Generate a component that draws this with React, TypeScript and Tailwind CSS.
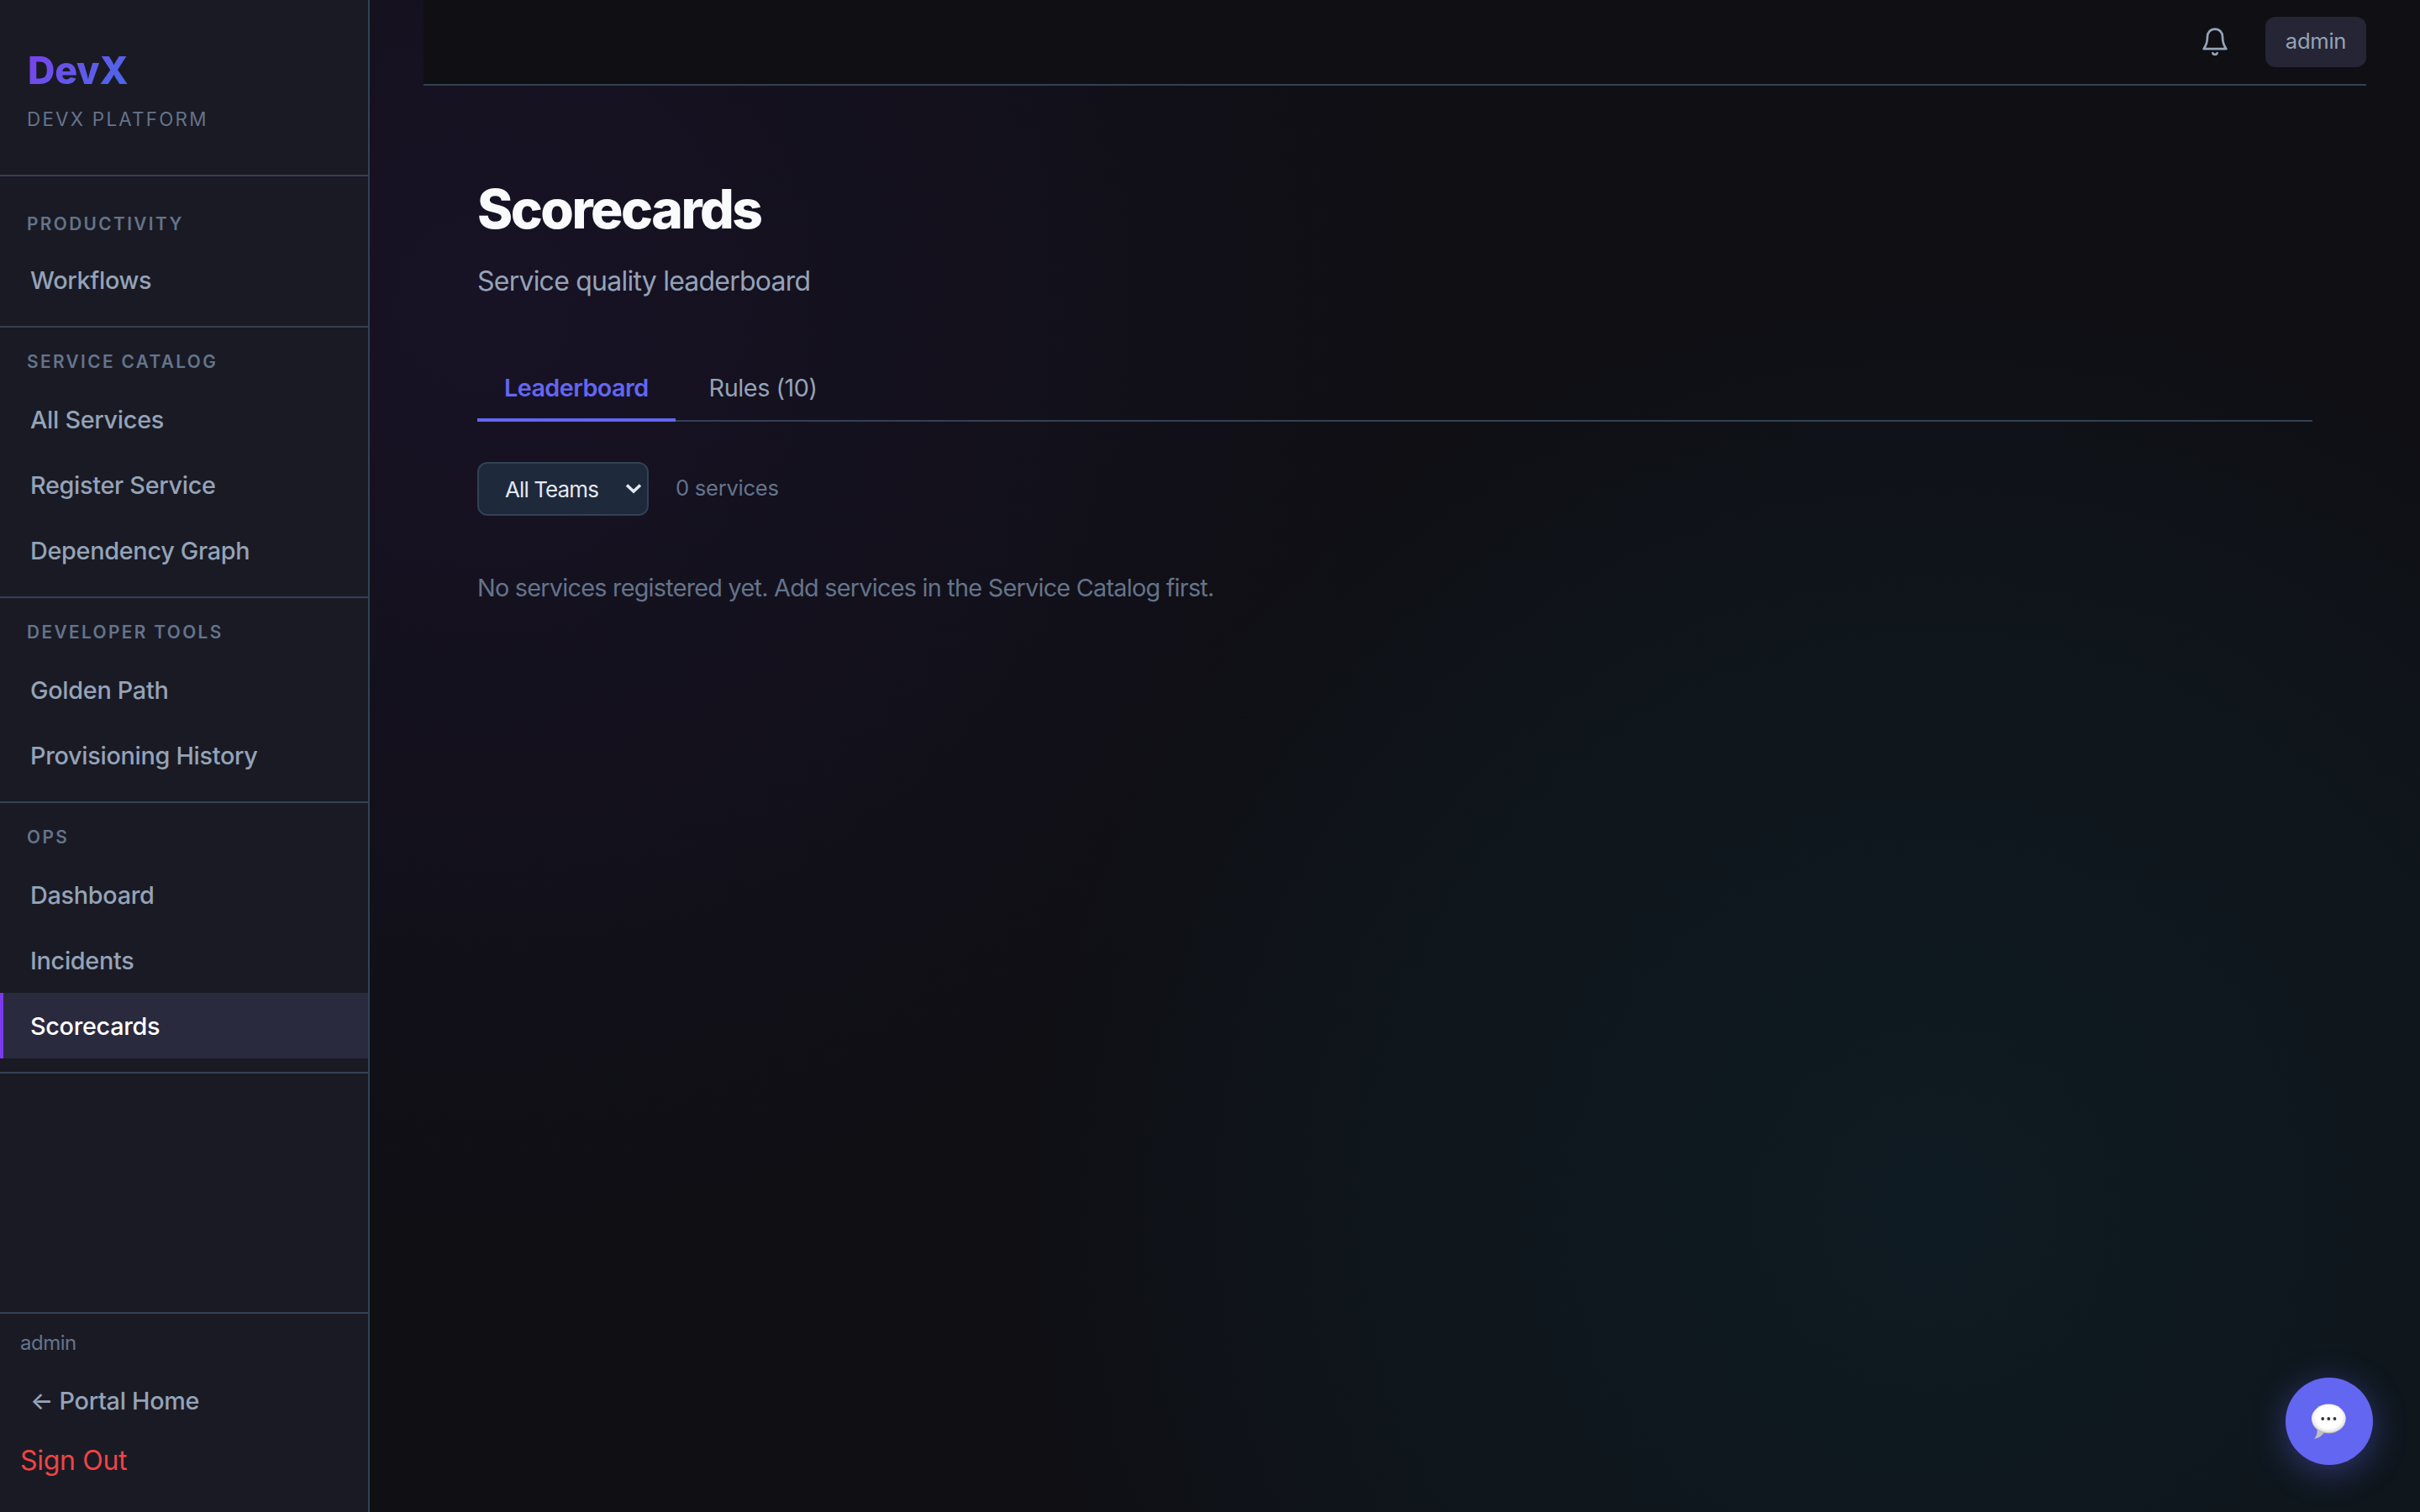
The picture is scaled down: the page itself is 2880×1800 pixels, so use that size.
const navSections = [
  { title: 'Productivity', items: ['Workflows'] },
  { title: 'Service Catalog', items: ['All Services', 'Register Service', 'Dependency Graph'] },
  { title: 'Developer Tools', items: ['Golden Path', 'Provisioning History'] },
  { title: 'Ops', items: ['Dashboard', 'Incidents', 'Scorecards'] },
];

const activeItem = 'Scorecards';

function NavItem({ label, active = false }: { label: string; active?: boolean }) {
  return (
    <a
      href="#"
      className={
        active
          ? 'flex h-[78px] items-center border-l-4 border-[#7c3aed] bg-[#2a2a3e] pt-0.5 pl-8 text-[28.8px] font-medium tracking-[-0.3px] text-white'
          : 'flex h-[78px] items-center border-l-4 border-transparent pt-0.5 pl-8 text-[28.8px] font-medium tracking-[-0.3px] text-[#94a3b8]'
      }
    >
      {label}
    </a>
  );
}

function Sidebar() {
  return (
    <aside className="flex h-full w-[440px] shrink-0 flex-col border-r-2 border-[#334155] bg-[#1a1a24]">
      <div className="flex h-[210px] flex-col items-start border-b-2 border-[#334155] px-8 pt-12">
        <div className="bg-linear-135 from-[#7c3aed] to-[#3b6de6] bg-clip-text pl-px text-[44.8px] leading-[72px] font-extrabold tracking-[-0.2px] text-transparent">
          DevX
        </div>
        <div className="mt-1 text-[22.4px] leading-9 tracking-[2.24px] text-[#64748b] uppercase">
          DevX Platform
        </div>
      </div>

      <nav className="flex-1">
        {navSections.map((section, i) => (
          <div key={section.title} className="border-b-2 border-[#334155] pb-4">
            <div
              className={
                i === 0
                  ? 'h-[84px] px-8 pt-10 text-[20.8px] leading-[33px] font-semibold tracking-[2.4px] text-[#64748b] uppercase'
                  : 'h-[70px] px-8 pt-6 text-[20.8px] leading-[33px] font-semibold tracking-[2.4px] text-[#64748b] uppercase'
              }
            >
              {section.title}
            </div>
            {section.items.map((item) => (
              <NavItem key={item} label={item} active={item === activeItem} />
            ))}
          </div>
        ))}
      </nav>

      <div className="h-[238px] border-t-2 border-[#334155] pt-4">
        <div className="px-6 text-2xl leading-[38px] tracking-[-0.5px] text-[#64748b]">admin</div>
        <div className="mt-2.5">
          <NavItem label="← Portal Home" />
        </div>
        <button className="px-6 pt-[7px] text-[32px] leading-[51px] tracking-[-0.3px] text-[#ef4444]">
          Sign Out
        </button>
      </div>
    </aside>
  );
}

function BellIcon() {
  return (
    <svg width="36" height="36" viewBox="0 0 36 36" fill="none" stroke="currentColor" strokeWidth="2.7" strokeLinecap="round" strokeLinejoin="round">
      <path d="M18 2.6c-5.4 0-9 3.9-9 9.2 0 7.4-1.5 10.5-4.400 14.400h26.800c-2.900-3.900-4.400-7-4.400-14.400 0-5.300-3.600-9.200-9-9.200z" />
      <path d="M15.300 31.200c.8 2.200 4.600 2.200 5.400 0" />
    </svg>
  );
}

function TopBar() {
  return (
    <header className="mx-16 flex h-[102px] items-center justify-end gap-[42px] border-b-2 border-[#334155] bg-[#0f0f14] text-[#94a3b8]">
      <button aria-label="Notifications">
        <BellIcon />
      </button>
      <div className="flex h-[60px] w-[120px] items-center justify-center rounded-xl bg-[#252535] pb-0.5 text-[25.6px] tracking-[-0.3px]">
        admin
      </div>
    </header>
  );
}

function ChatButton() {
  return (
    <button
      aria-label="Open chat"
      className="absolute right-14 bottom-14 flex size-[104px] items-center justify-center rounded-full bg-[#6366f1] shadow-[0_8px_40px_rgba(99,102,241,0.4)]"
    >
      <svg width="44" height="44" viewBox="0 0 44 44">
        <defs>
          <radialGradient id="bubble" cx="0.5" cy="0.45" r="0.55">
            <stop offset="0.7" stopColor="#ffffff" />
            <stop offset="0.9" stopColor="#e4e4e4" />
            <stop offset="1" stopColor="#a8a8a8" />
          </radialGradient>
        </defs>
        <path d="M7.500 32c.6 3.600-.6 7.400-3.200 11 4.600-.8 9-3.400 12.200-8z" fill="#c0c0c0" />
        <ellipse cx="21.300" cy="19" rx="20.400" ry="17.500" fill="url(#bubble)" />
        <g fill="#333333">
          <circle cx="14.200" cy="19" r="1.900" />
          <circle cx="21.300" cy="19" r="1.900" />
          <circle cx="28.500" cy="19" r="1.900" />
        </g>
      </svg>
    </button>
  );
}

export default function App() {
  return (
    <div className="relative flex h-[1800px] w-[2880px] overflow-hidden bg-[#0f0f14] bg-[radial-gradient(circle_at_20%_20%,rgba(124,58,237,0.08)_0%,transparent_41%),radial-gradient(circle_at_80%_80%,rgba(6,182,212,0.07)_0%,rgba(6,182,212,0.044)_22%,rgba(6,182,212,0.026)_31%,transparent_40%)] font-['Inter',sans-serif]">
      <Sidebar />
      <main className="flex-1">
        <TopBar />
        <div className="px-32 pt-24">
          <h1 className="text-[64px] leading-[102px] font-extrabold tracking-[-2.5px] text-[#f8fafc]">Scorecards</h1>
          <p className="mt-[9px] text-[32px] leading-[51px] tracking-[-0.77px] text-[#94a3b8]">
            Service quality leaderboard
          </p>

          <div className="mt-16 flex h-[78px] gap-2 border-b-2 border-[#334155] text-[28.8px]">
            <button className="-mb-0.5 h-[78px] border-b-4 border-[#6366f1] px-8 pt-0.5 font-semibold tracking-[-0.59px] text-[#6366f1]">
              Leaderboard
            </button>
            <button className="-mb-0.5 h-[78px] border-b-4 border-transparent px-8 pt-0.5 tracking-[-0.45px] text-[#94a3b8]">
              Rules (10)
            </button>
          </div>

          <div className="mt-12 flex items-center gap-8">
            <div className="flex h-16 w-[204px] items-center justify-between rounded-xl border-2 border-[#334155] bg-[#1e293b] pr-1.5 pl-[31px] text-[26px] tracking-[-0.9px] text-[#e2e8f0]">
              All Teams
              <svg width="20" height="14" viewBox="0 0 20 14" fill="none" stroke="currentColor" strokeWidth="3.600">
                <path d="M2 2.500l8 7.500 8-7.500" />
              </svg>
            </div>
            <span className="pb-0.5 text-[25.6px] tracking-[-0.28px] text-[#64748b]">0 services</span>
          </div>

          <p className="mt-[63px] text-[28.8px] leading-[46px] tracking-[-0.75px] text-[#64748b]">
            No services registered yet. Add services in the Service Catalog first.
          </p>
        </div>
      </main>
      <ChatButton />
    </div>
  );
}
